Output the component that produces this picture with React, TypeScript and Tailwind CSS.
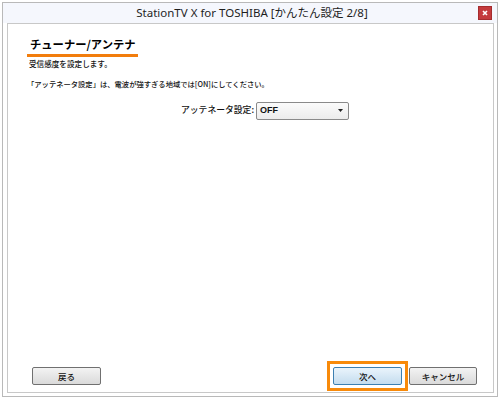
import React from "react";

const jp = { fontFamily: '"Noto Sans CJK JP", "Noto Sans", sans-serif' };

export default function App() {
  return (
    <div className="w-[500px] h-[400px] bg-white pt-[2px] pl-[2px] pr-[2px] pb-[3px]" style={jp}>
      <div className="h-full border border-[#b9b9b9] bg-white flex flex-col">
        <div className="h-[20px] bg-[#f5f7fd] flex items-center relative">
          <div className="flex-1 text-center text-[11.5px] text-[#1e1e1e] leading-none pl-[4px]" style={{ fontFamily: '"Noto Sans", "Noto Sans CJK JP", sans-serif' }}>
            StationTV X for TOSHIBA [かんたん設定 2/8]
          </div>
          <div className="absolute right-[5px] top-[3px] w-[14px] h-[14px] bg-[#c43b3d] border border-[#a52c2e] flex items-center justify-center">
            <svg width="6" height="6" viewBox="0 0 6 6">
              <path d="M1 1 L5 5 M5 1 L1 5" stroke="white" strokeWidth="1.6" />
            </svg>
          </div>
        </div>
        <div className="flex-1 ml-[4px] mr-[3px] mb-[3px] border border-[#c8c8c8] flex flex-col">
          <div className="pl-[19px] pt-[6px]">
            <div className="inline-block border-b-[3px] border-[#f27d0c] pl-[3px] pr-[2px] pb-[1px]">
              <span className="text-[11.3px] font-bold text-black leading-[17px] block">チューナー/アンテナ</span>
            </div>
          </div>
          <div className="pl-[21px] pt-[3px] text-[7.6px] text-[#111] leading-none font-medium">受信感度を設定します。</div>
          <div className="pl-[19px] pt-[13px] text-[7.3px] text-[#111] leading-none font-medium">「アッテネータ設定」は、電波が強すぎる地域では[ON]にしてください。</div>
          <div className="flex items-center pl-[173px] pt-[14px]">
            <span className="text-[8.8px] text-[#111] leading-none mr-[2px] font-medium">アッテネータ設定:</span>
            <div className="w-[93px] h-[18px] border border-[#8a8a8a] rounded-[2px] bg-gradient-to-b from-[#fbfbfb] to-[#ececec] flex items-center justify-between pl-[3px] pr-[5px]">
              <span className="text-[9px] font-bold text-[#111] leading-none" style={{ fontFamily: '"Liberation Sans", Arial, sans-serif' }}>OFF</span>
              <svg width="5" height="3" viewBox="0 0 5 3"><path d="M0 0 L5 0 L2.5 3 Z" fill="#222" /></svg>
            </div>
          </div>
          <div className="flex-1" />
          <div className="flex items-center pl-[24px] pr-[16px] pb-[1px]">
            <div className="w-[69px] h-[18px] border border-[#707070] rounded-[2px] bg-gradient-to-b from-[#f3f3f3] to-[#dadada] flex items-center justify-center text-[8.5px] text-[#111] leading-none font-medium">戻る</div>
            <div className="flex-1" />
            <div className="border-[3px] border-[#f88a0a] p-[3px]">
              <div className="w-[69px] h-[18px] border border-[#3c7fb1] rounded-[2px] bg-gradient-to-b from-[#eaf4fc] to-[#c4dcee] flex items-center justify-center text-[8.5px] text-[#111] leading-none font-medium">次へ</div>
            </div>
            <div className="w-[68px] h-[18px] ml-[1px] border border-[#707070] rounded-[2px] bg-gradient-to-b from-[#f3f3f3] to-[#dadada] flex items-center justify-center text-[8.5px] text-[#111] leading-none font-medium">キャンセル</div>
          </div>
        </div>
      </div>
    </div>
  );
}
